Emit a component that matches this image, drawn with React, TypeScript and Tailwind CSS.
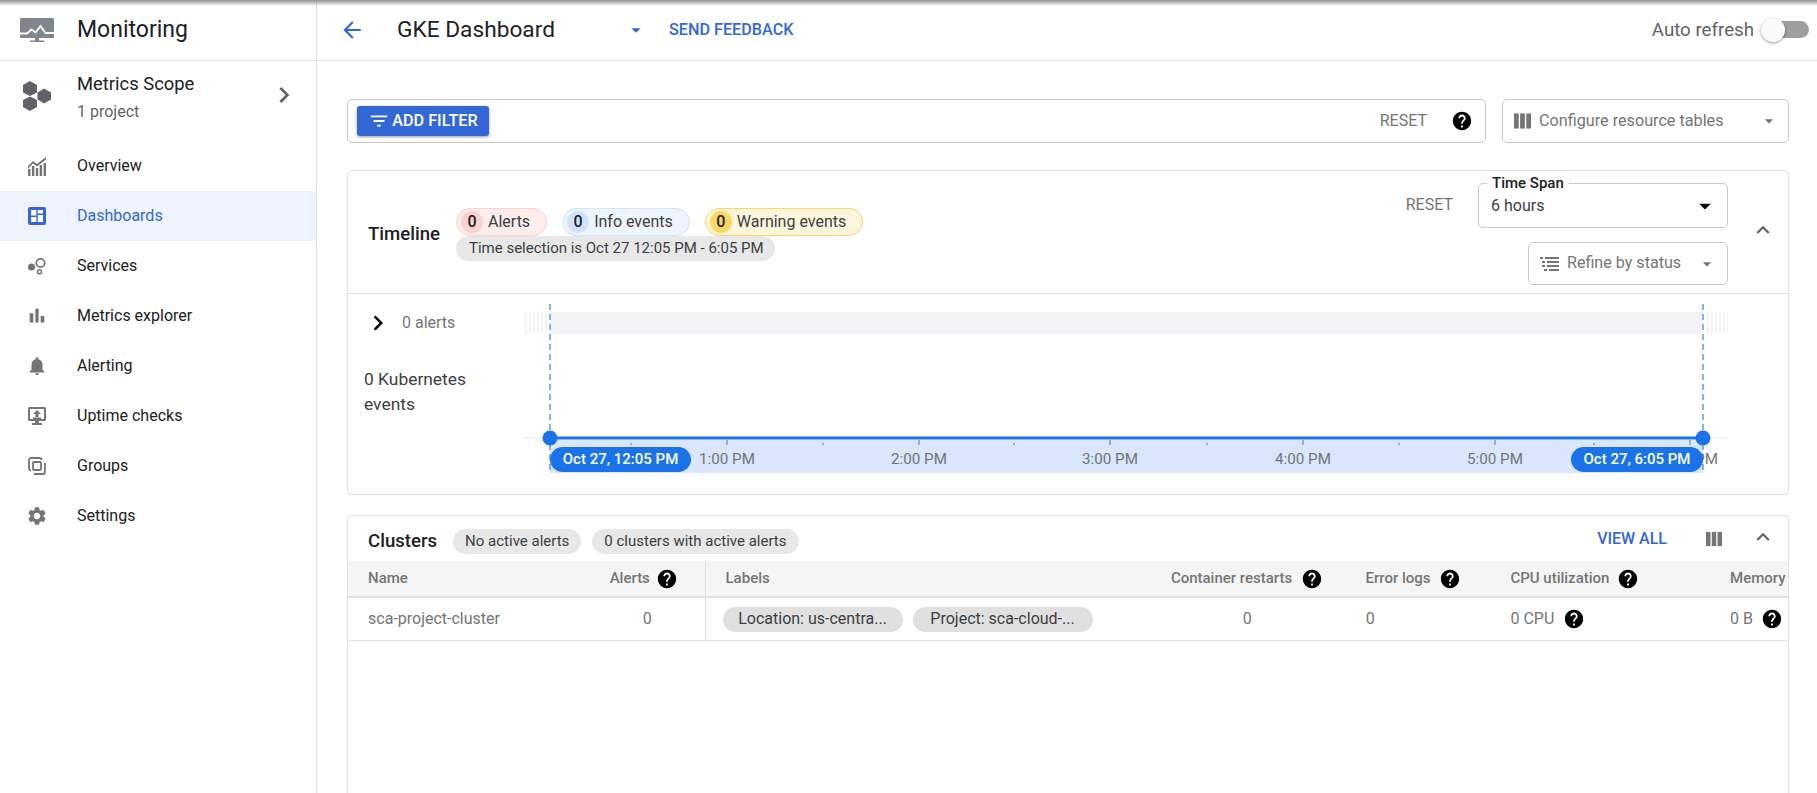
const HELP_PATH =
  "M12 2C6.48 2 2 6.48 2 12s4.48 10 10 10 10-4.48 10-10S17.52 2 12 2zm1 17h-2v-2h2v2zm2.07-7.75l-.9.92C13.45 12.9 13 13.5 13 15h-2v-.5c0-1.1.45-2.1 1.17-2.83l1.24-1.26c.37-.36.59-.86.59-1.41 0-1.1-.9-2-2-2s-2 .9-2 2H8c0-2.21 1.79-4 4-4s4 1.79 4 4c0 .88-.36 1.68-.93 2.25z";

function Mi({ d, className }: { d: string; className?: string }) {
  return (
    <svg viewBox="0 0 24 24" fill="currentColor" className={className}>
      <path d={d} />
    </svg>
  );
}

function Help({ className = "" }: { className?: string }) {
  return <Mi d={HELP_PATH} className={`h-[22px] w-[22px] shrink-0 text-black ${className}`} />;
}

function Columns({ className }: { className?: string }) {
  return (
    <svg viewBox="0 0 18 16" fill="currentColor" className={className}>
      <rect x="0" y="0" width="5" height="16" />
      <rect x="6.5" y="0" width="5" height="16" />
      <rect x="13" y="0" width="5" height="16" />
    </svg>
  );
}

const DROP = "M7 10l5 5 5-5z";
const UP = "M12 8l-6 6 1.41 1.41L12 10.83l4.59 4.58L18 14z";
const RIGHT = "M10 6L8.59 7.41 13.17 12l-4.58 4.59L10 18l6-6z";

const navIcons: Record<string, React.ReactNode> = {
  Overview: (
    <svg viewBox="0 0 18 19" fill="#757575" className="h-[19px] w-[18px]">
      <rect x="0" y="12" width="2.4" height="7" />
      <rect x="3.9" y="9" width="2.4" height="10" />
      <rect x="7.8" y="11" width="2.4" height="8" />
      <rect x="11.7" y="8" width="2.4" height="11" />
      <rect x="15.6" y="6" width="2.4" height="13" />
      <path d="M0 9l5-5 4 3 9-7v2.4L9 9.6 5 6.6 0 11.4z" />
    </svg>
  ),
  Dashboards: (
    <svg viewBox="0 0 18 18" className="h-[18px] w-[18px]">
      <rect width="18" height="18" rx="2" fill="#3367d6" />
      <path fill="#fff" d="M3 3h5.3v5.5H3zM9.7 3H15v3.5H9.7zM9.7 8H15v7H9.7zM3 10h5.3v5H3z" />
    </svg>
  ),
  Services: (
    <svg viewBox="0 0 18 18" fill="#757575" className="h-[18px] w-[18px]">
      <circle cx="3.5" cy="10" r="3.5" />
      <circle cx="12.5" cy="6" r="4.2" fill="none" stroke="#757575" strokeWidth="1.8" />
      <circle cx="11.5" cy="14.8" r="2" fill="none" stroke="#757575" strokeWidth="1.6" />
    </svg>
  ),
  "Metrics explorer": <Mi d="M4 9h4v10H4zM10.2 4h3.6v15h-3.6zM16 12h4v7h-4z" className="h-[22px] w-[22px] text-[#757575]" />,
  Alerting: (
    <Mi
      d="M12 22c1.1 0 2-.9 2-2h-4c0 1.1.89 2 2 2zm6-6v-5c0-3.07-1.64-5.64-4.5-6.32V4c0-.83-.67-1.5-1.5-1.5s-1.5.67-1.5 1.5v.68C7.63 5.36 6 7.92 6 11v5l-2 2v1h16v-1l-2-2z"
      className="h-[22px] w-[22px] text-[#757575]"
    />
  ),
  "Uptime checks": (
    <svg viewBox="0 0 18 18" className="h-[18px] w-[18px]">
      <path fill="#757575" d="M1.5 0h15A1.5 1.5 0 0 1 18 1.5v11a1.5 1.5 0 0 1-1.5 1.5H1.5A1.5 1.5 0 0 1 0 12.5v-11A1.5 1.5 0 0 1 1.5 0zM7 14h4v2h3v2H4v-2h3z" />
      <path fill="#fff" d="M2 2h14v10H2z" />
      <path fill="#757575" d="M9 3l4 4h-2.4v3H7.4V7H5zM5 10.4h8V12H5z" />
    </svg>
  ),
  Groups: (
    <svg viewBox="0 0 18 18" fill="none" stroke="#757575" className="h-[18px] w-[18px]">
      <path strokeWidth="1.8" d="M3 13.5A2 2 0 0 1 1 11.5V3a2 2 0 0 1 2-2h8.5a2 2 0 0 1 2 2" />
      <rect x="5" y="5" width="8" height="8" rx="1" strokeWidth="1.8" />
      <path strokeWidth="1.8" d="M16.9 6v9a2 2 0 0 1-2 2H6" />
    </svg>
  ),
  Settings: (
    <Mi
      d="M19.14 12.94c.04-.3.06-.61.06-.94 0-.32-.02-.64-.07-.94l2.03-1.58c.18-.14.23-.41.12-.61l-1.92-3.32c-.12-.22-.37-.29-.59-.22l-2.39.96c-.5-.38-1.03-.7-1.62-.94l-.36-2.54c-.04-.24-.24-.41-.48-.41h-3.84c-.24 0-.43.17-.47.41l-.36 2.54c-.59.24-1.13.57-1.62.94l-2.39-.96c-.22-.08-.47 0-.59.22L2.74 8.87c-.12.21-.08.47.12.61l2.03 1.58c-.05.3-.09.63-.09.94s.02.64.07.94l-2.03 1.58c-.18.14-.23.41-.12.61l1.92 3.32c.12.22.37.29.59.22l2.39-.96c.5.38 1.03.7 1.62.94l.36 2.54c.05.24.24.41.48.41h3.84c.24 0 .44-.17.47-.41l.36-2.54c.59-.24 1.13-.56 1.62-.94l2.39.96c.22.08.47 0 .59-.22l1.92-3.32c.12-.22.07-.47-.12-.61l-2.01-1.58zM12 15.6c-1.98 0-3.6-1.62-3.6-3.6s1.62-3.6 3.6-3.6 3.6 1.62 3.6 3.6-1.62 3.6-3.6 3.6z"
      className="h-[22px] w-[22px] text-[#757575]"
    />
  ),
};

const navItems = ["Overview", "Dashboards", "Services", "Metrics explorer", "Alerting", "Uptime checks", "Groups", "Settings"];

function Sidebar() {
  return (
    <aside className="flex w-[317px] shrink-0 flex-col border-r border-[#e0e0e0]">
      <div className="flex h-[61px] items-center border-b border-[#e0e0e0]">
        <svg viewBox="0 0 34 24" className="ml-[20px] h-[24px] w-[34px]">
          <path fill="#80868b" d="M1 0h32a1 1 0 0 1 1 1v18a1 1 0 0 1-1 1H1a1 1 0 0 1-1-1V1a1 1 0 0 1 1-1z" />
          <path fill="#80868b" d="M15 20h4v2.5h5V24H10v-1.5h5z" />
          <path fill="none" stroke="#fff" strokeWidth="1.8" d="M0 15.5h7l4.5-4 4 3 5-6.5 5 7H34" />
        </svg>
        <span className="ml-[23px] text-[23px] text-[#202124]">Monitoring</span>
      </div>
      <div className="flex h-[80px] items-start">
        <svg viewBox="0 0 30 30" fill="#5f6368" className="ml-[22px] mt-[20px] h-[30px] w-[30px]">
          <polygon points="8,0 15,4 15,11.5 8,15 1,11.5 1,4" />
          <polygon points="22,7.5 29,11.5 29,18.5 22,22.5 15.5,18.5 15.5,11.5" />
          <polygon points="8,15.5 15,19 15,26 8,30 1,26 1,19" />
        </svg>
        <div className="ml-[25px] mt-[11px] flex-1">
          <div className="text-[18.4px] leading-[24px] text-[#202124]">Metrics Scope</div>
          <div className="mt-[6px] text-[16px] leading-[20px] text-[#5f6368]">1 project</div>
        </div>
        <Mi d={RIGHT} className="mr-[16px] mt-[18px] h-[32px] w-[32px] text-[#5f6368]" />
      </div>
      <nav>
        {navItems.map((item) => (
          <div
            key={item}
            className={`flex h-[50px] items-center text-[16px] ${
              item === "Dashboards" ? "bg-[#eef3fd] text-[#3367d6]" : "text-[#202124]"
            }`}
          >
            <div className="ml-[26px] flex w-[22px] justify-center">{navIcons[item]}</div>
            <span className="ml-[29px]">{item}</span>
          </div>
        ))}
      </nav>
    </aside>
  );
}

function Header() {
  return (
    <header className="flex h-[61px] shrink-0 items-center border-b border-[#e0e0e0]">
      <Mi d="M20 11H7.83l5.59-5.59L12 4l-8 8 8 8 1.41-1.41L7.83 13H20v-2z" className="ml-[22px] h-[26px] w-[26px] text-[#3367d6]" />
      <span className="ml-[32px] w-[228px] text-[22.7px] text-[#202124]">GKE Dashboard</span>
      <Mi d={DROP} className="h-[22px] w-[22px] text-[#3367d6]" />
      <span className="ml-[22px] text-[16.2px] font-medium text-[#3367d6]">SEND FEEDBACK</span>
      <div className="ml-auto flex items-center">
        <span className="text-[18.7px] text-[#5f6368]">Auto refresh</span>
        <div className="relative ml-[19px] mr-[8px] h-[17px] w-[36px] rounded-full bg-[#9e9e9e]">
          <div className="absolute left-[-12px] top-[-3px] h-[24px] w-[24px] rounded-full bg-[#fafafa] shadow-[0_1px_3px_rgba(0,0,0,0.4)]" />
        </div>
      </div>
    </header>
  );
}

function FilterRow() {
  return (
    <div className="flex gap-[16px]">
      <div className="flex h-[44px] flex-1 items-center rounded-[5px] border border-[#c9c9c9] pl-[9px]">
        <button className="flex h-[30px] w-[132px] items-center justify-center rounded-[3px] bg-[#3367d6] text-[16.2px] font-medium text-white shadow-[0_1px_3px_rgba(0,0,0,0.4)]">
          <Mi d="M10 18h4v-2h-4v2zM3 6v2h18V6H3zm3 7h12v-2H6v2z" className="mr-[2px] h-[22px] w-[22px]" />
          ADD FILTER
        </button>
        <span className="ml-auto text-[16px] text-[#757575]">RESET</span>
        <Help className="ml-[24px] mr-[12px]" />
      </div>
      <div className="flex h-[44px] w-[287px] items-center rounded-[5px] border border-[#c9c9c9] pl-[11px] text-[16.2px] text-[#757575]">
        <Columns className="h-[16px] w-[17px]" />
        <span className="ml-[8px]">Configure resource tables</span>
        <Mi d={DROP} className="ml-auto mr-[9px] h-[20px] w-[20px]" />
      </div>
    </div>
  );
}

function Chip({ n, label, outer, inner }: { n: number; label: string; outer: string; inner: string }) {
  return (
    <div className={`flex h-[28px] items-center rounded-full border pl-[4px] pr-[16px] text-[16px] text-[#3c4043] ${outer}`}>
      <span className={`flex h-[22px] w-[22px] items-center justify-center rounded-full font-medium text-[#202124] ${inner}`}>{n}</span>
      <span className="ml-[5px]">{label}</span>
    </div>
  );
}

function TimelineHeader() {
  return (
    <div className="flex h-[123px] items-center border-b border-[#e0e0e0] pl-[20px]">
      <span className="mt-[6px] w-[88px] text-[18.6px] font-medium text-[#202124]">Timeline</span>
      <div className="mt-[5px]">
        <div className="flex gap-[15px]">
          <Chip n={0} label="Alerts" outer="border-[#fad2cf] bg-[#fdeeed]" inner="bg-[#fad2cf]" />
          <Chip n={0} label="Info events" outer="border-[#d2e3fc] bg-[#eff5fe]" inner="bg-[#d2e3fc]" />
          <Chip n={0} label="Warning events" outer="border-[#fdd663] bg-[#fef6dc]" inner="bg-[#fdd663]" />
        </div>
        <div className="flex h-[25px] w-[319px] items-center rounded-full bg-[#e8e8e8] pl-[13px] text-[15px] text-[#3c4043]">
          Time selection is Oct 27 12:05 PM - 6:05 PM
        </div>
      </div>
      <div className="ml-auto flex items-start self-start">
        <div className="flex flex-col items-end pt-[12px]">
          <div className="flex">
            <span className="mr-[25px] mt-[10px] text-[16px] text-[#757575]">RESET</span>
            <div className="relative flex h-[45px] w-[250px] items-center rounded-[5px] border border-[#c9c9c9] pl-[12px] text-[16px] text-[#3c4043]">
              <span className="absolute left-[8px] top-[-11px] bg-white px-[5px] text-[15px] font-medium leading-[20px] text-[#202124]">Time Span</span>
              <span>6 hours</span>
              <Mi d={DROP} className="ml-auto mr-[8px] h-[28px] w-[28px] text-black" />
            </div>
          </div>
          <div className="mt-[14px] flex h-[43px] w-[200px] items-center rounded-[5px] border border-[#c9c9c9] pl-[11px] text-[16.1px] text-[#757575]">
            <svg viewBox="0 0 19 14" fill="#757575" className="h-[14px] w-[19px]">
              <path d="M0 0h3v2H0zM5 0h14v2H5zM2 4h3v2H2zM7 4h12v2H7zM2 8h3v2H2zM7 8h12v2H7zM4 12h3v2H4zM9 12h10v2H9z" />
            </svg>
            <span className="ml-[8px]">Refine by status</span>
            <Mi d={DROP} className="ml-auto mr-[10px] h-[20px] w-[20px]" />
          </div>
        </div>
        <div className="flex w-[60px] justify-center pl-[10px] pt-[46px]">
          <Mi d={UP} className="h-[26px] w-[26px] text-[#5f6368]" />
        </div>
      </div>
    </div>
  );
}

const hours = ["1:00 PM", "2:00 PM", "3:00 PM", "4:00 PM", "5:00 PM", "6:00 PM"];
const hourX = [202, 394, 585, 778, 970, 1165];

function TimelineChart() {
  const leftX = 25;
  const rightX = 1178;
  return (
    <div className="relative ml-[3px] h-[199px] w-[1203px]">
      <svg viewBox="0 0 1203 199" className="absolute inset-0 h-full w-full">
        <rect x={leftX} y="18" width={rightX - leftX} height="22" fill="#f1f3f4" />
        {[0, 4, 8, 12, 16, 20].map((o) => (
          <g key={o}>
            <rect x={o} y="18" width="2" height="22" fill="#f1f3f4" />
            <rect x={rightX + 4 + o} y="18" width="2" height="22" fill="#f1f3f4" />
          </g>
        ))}
        <rect x={leftX} y="146" width={rightX - leftX} height="33" fill="#d9e6fc" />
        <line x1="0" y1="144" x2="1203" y2="144" stroke="#e8eaed" />
        <line x1={leftX} y1="144" x2={rightX} y2="144" stroke="#1a73e8" strokeWidth="3" />
        {hourX.map((x) => (
          <g key={x}>
            <line x1={x} y1="146" x2={x} y2="151" stroke="#70757a" />
            <line x1={x - 96} y1="149" x2={x - 96} y2="151" stroke="#70757a" />
          </g>
        ))}
        <line x1={leftX} y1="10" x2={leftX} y2="179" stroke="#5f9cf0" strokeWidth="1.5" strokeDasharray="6 4" />
        <line x1={rightX} y1="10" x2={rightX} y2="179" stroke="#5f9cf0" strokeWidth="1.5" strokeDasharray="6 4" />
        <circle cx={leftX} cy="144" r="7.5" fill="#1a73e8" />
        <circle cx={rightX} cy="144" r="7.5" fill="#1a73e8" />
      </svg>
      {hours.map((h, i) => (
        <span
          key={h}
          className="absolute top-[155px] -translate-x-1/2 whitespace-nowrap text-[15.2px] leading-[20px] text-[#70757a]"
          style={{ left: hourX[i] }}
        >
          {h}
        </span>
      ))}
      <span className="absolute left-[25px] top-[153px] flex h-[25px] w-[141px] items-center justify-center rounded-full bg-[#1a73e8] text-[15px] font-medium text-white">
        Oct 27, 12:05 PM
      </span>
      <span className="absolute left-[1046px] top-[153px] flex h-[25px] w-[132px] items-center justify-center rounded-full bg-[#1a73e8] text-[15px] font-medium text-white">
        Oct 27, 6:05 PM
      </span>
    </div>
  );
}

function TimelineCard() {
  return (
    <section className="mt-[27px] h-[325px] rounded-[5px] border border-[#e0e0e0]">
      <TimelineHeader />
      <div className="flex">
        <div className="w-[174px] pl-[16px] pt-[14px]">
          <div className="flex h-[30px] items-center">
            <Mi d={RIGHT} className="-ml-[1px] h-[30px] w-[30px] text-black" />
            <span className="ml-[9px] text-[16px] text-[#757575]">0 alerts</span>
          </div>
          <div className="mt-[29px] text-[17.4px] leading-[25px] text-[#3c4043]">
            0 Kubernetes
            <br />
            events
          </div>
        </div>
        <TimelineChart />
      </div>
    </section>
  );
}

const headerCell = "flex items-center text-[15px] font-medium text-[#757575]";

function ClustersCard() {
  return (
    <section className="mt-[20px] flex-1 overflow-hidden rounded-t-[5px] border border-b-0 border-[#e0e0e0]">
      <div className="flex h-[45px] items-center pl-[20px]">
        <span className="mt-[6px] text-[18.6px] font-medium text-[#202124]">Clusters</span>
        <span className="ml-[16px] mt-[6px] flex h-[25px] items-center rounded-full bg-[#e8e8e8] px-[12px] text-[15px] text-[#3c4043]">No active alerts</span>
        <span className="ml-[11px] mt-[6px] flex h-[25px] items-center rounded-full bg-[#e8e8e8] px-[12px] text-[15px] text-[#3c4043]">0 clusters with active alerts</span>
        <span className="ml-auto text-[16px] font-medium text-[#3367d6]">VIEW ALL</span>
        <Columns className="ml-[39px] h-[16px] w-[16px] text-[#757575]" />
        <Mi d={UP} className="mb-[3px] ml-[28px] mr-[12px] h-[26px] w-[26px] text-[#5f6368]" />
      </div>
      <div className="flex h-[37px] overflow-hidden border-b-2 border-[#e0e0e0] bg-[#f5f5f5]">
        <div className={`${headerCell} w-[262px] pl-[20px]`}>Name</div>
        <div className={`${headerCell} w-[96px] border-r border-[#e0e0e0]`}>
          Alerts
          <Help className="ml-[6px]" />
        </div>
        <div className={`${headerCell} w-[466px] pl-[20px]`}>Labels</div>
        <div className={`${headerCell} w-[195px]`}>
          Container restarts
          <Help className="ml-[9px]" />
        </div>
        <div className={`${headerCell} w-[145px]`}>
          Error logs
          <Help className="ml-[8px]" />
        </div>
        <div className={`${headerCell} w-[220px]`}>
          CPU utilization
          <Help className="ml-[8px]" />
        </div>
        <div className={`${headerCell} w-[58px] overflow-hidden`}>Memory</div>
      </div>
      <div className="flex h-[43px] items-center border-b border-[#e0e0e0] text-[16px] text-[#757575]">
        <div className="w-[262px] pl-[20px]">sca-project-cluster</div>
        <div className="flex h-full w-[96px] items-center border-r border-[#e0e0e0] pl-[33px]">0</div>
        <div className="flex w-[466px] gap-[10px] pl-[17px]">
          <span className="flex h-[25px] w-[180px] items-center justify-center rounded-full bg-[#e0e0e0] text-[#3c4043]">Location: us-centra...</span>
          <span className="flex h-[25px] w-[180px] items-center justify-center rounded-full bg-[#e0e0e0] text-[#3c4043]">Project: sca-cloud-...</span>
        </div>
        <div className="w-[195px] pl-[72px]">0</div>
        <div className="w-[145px]">0</div>
        <div className="flex w-[220px] items-center">
          0 CPU
          <Help className="ml-[9px]" />
        </div>
        <div className="flex w-[58px] items-center">
          0 B
          <Help className="ml-[8px]" />
        </div>
      </div>
    </section>
  );
}

export default function App() {
  return (
    <div className="relative flex h-[793px] w-[1817px] overflow-hidden bg-white font-[Roboto,sans-serif]">
      <div className="absolute inset-x-0 top-0 h-[6px] bg-gradient-to-b from-[#8f8f8f] to-transparent" />
      <Sidebar />
      <main className="flex min-w-0 flex-1 flex-col">
        <Header />
        <div className="flex flex-1 flex-col overflow-hidden pl-[30px] pr-[28px] pt-[38px]">
          <FilterRow />
          <TimelineCard />
          <ClustersCard />
        </div>
      </main>
    </div>
  );
}
